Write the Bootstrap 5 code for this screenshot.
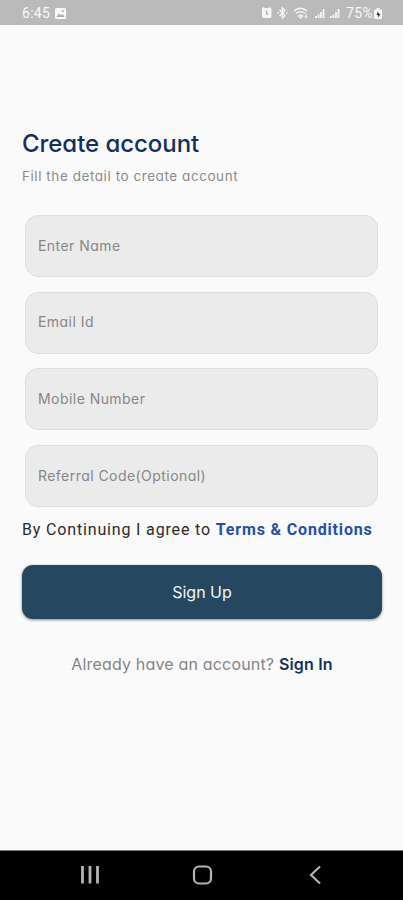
<!DOCTYPE html>
<html lang="en">
<head>
<meta charset="utf-8">
<meta name="viewport" content="width=device-width, initial-scale=1">
<title>Create account</title>
<link href="https://cdn.jsdelivr.net/npm/bootstrap@5.3.0/dist/css/bootstrap.min.css" rel="stylesheet">
<style>
body{background:#fafafa;font-family:Inter,"Open Sans",sans-serif;font-feature-settings:"cv11" 1;height:900px;overflow:hidden}
.status{height:25px;background:#bababa;color:#f8f8f8;font:14px/25px Roboto,sans-serif;letter-spacing:.3px;padding:1px 20px 0 22px}
.status svg{display:block}
.signup{padding:103px 21px 0 22px}
.title{font-size:24px;line-height:32px;font-weight:550;color:#12305f;letter-spacing:-.05px}
.subtitle{font-size:13.5px;line-height:20px;color:#8c8c8c;margin-top:6px;letter-spacing:.56px}
.fields{margin:29px 4px 0 3px;display:grid;gap:14.7px}
.fields .form-control{height:62px;border-radius:13px;background:#ebebeb;border:1px solid #dedede;padding:0 12px 2px;font-size:14px;letter-spacing:.45px;font-feature-settings:inherit}
.fields .form-control::placeholder{color:#86878a;opacity:1}
.terms{font:16px/22px Roboto,sans-serif;color:#2b2b2b;letter-spacing:.84px;margin-top:12px}
.terms a{color:#2350a4;font-weight:700}
.submit{height:54px;margin-top:24px;border-radius:11px;background:#254760;border:0;color:#f4f6f8;font-size:16px;font-feature-settings:inherit;box-shadow:0 1px 3px #0007}
.signin{font-size:16px;line-height:24px;margin-top:33px;color:#858585;letter-spacing:.18px}
.signin a{color:#12335c;font-weight:600}
.sysnav{height:50px;background:#000;border-top:1px solid #777}
</style>
</head>
<body class="d-flex flex-column">
<header class="status d-flex align-items-center flex-shrink-0">
<span id="clock">6:45</span>
<svg class="ms-1" width="13" height="13" viewBox="0 0 13 13"><rect x="1" y="1" width="11" height="11" rx="1.5" fill="#f8f8f8"/><path d="M2.500 10 5 6.500l2 2L8.500 7l2.200 3z" fill="#aaa"/><circle cx="8.800" cy="4" r="1" fill="#aaa"/></svg>
<div class="d-flex align-items-center ms-auto">
<svg width="86" height="16" viewBox="0 0 86 16" fill="none" stroke="#f6f6f6" stroke-width="1.300">
<path d="M2 4l2-1.500M9 2.500 11 4"/><rect x="2" y="3" width="9.500" height="10" rx="2" fill="#f6f6f6" stroke="none"/><path d="M6.500 5.500v3l2 1" stroke="#aaa"/>
<path d="M19.500 4.800l5.500 6-2.700 2.500V2.700L25 5.200l-5.500 6M17.500 8h1.500M26 8h1.500"/>
<path d="M34 6q6.500-5.500 13 0M36 8.500q4.500-3.700 9 0M38.500 11q2-1.800 4 0l-2 2z"/><path d="M46 8.500v4.500m-1.500-1.500L46 13l1.500-1.500" stroke-width="1"/>
<path d="M56 13v-2M58.500 13V9.500M61 13V7M63.500 13V4M71 13v-2M73.500 13V9.500M76 13V7M78.500 13V4" stroke-width="1.800"/>
</svg>
<span id="battery">75%</span>
<svg width="10" height="13" viewBox="0 0 10 13"><path d="M1 3.500q0-1 1-1h1.500V1h3v1.500H8q1 0 1 1V11q0 1-1 1H2q-1 0-1-1z" fill="#f6f6f6"/><path d="M5 4.500 3.500 8H5v2.500L7.500 7H6z" fill="#333"/></svg>
</div>
</header>
<main class="signup flex-grow-1">
<h1 class="title m-0">Create account</h1>
<p class="subtitle mb-0">Fill the detail to create account</p>
<form>
<div class="fields">
<input class="form-control shadow-none" type="text" placeholder="Enter Name" aria-label="Name">
<input class="form-control shadow-none" type="email" placeholder="Email Id" aria-label="Email">
<input class="form-control shadow-none" type="tel" placeholder="Mobile Number" aria-label="Mobile number">
<input class="form-control shadow-none" type="text" placeholder="Referral Code(Optional)" aria-label="Referral code">
</div>
<p class="terms mb-0 text-nowrap">By Continuing I agree to <a href="#" class="text-decoration-none">Terms &amp; Conditions</a></p>
<button type="button" class="submit btn w-100 d-flex align-items-center justify-content-center">Sign Up</button>
</form>
<p class="signin mb-0 text-center text-nowrap">Already have an account? <a href="#" class="text-decoration-none">Sign In</a></p>
</main>
<footer class="sysnav flex-shrink-0">
<svg class="d-block" width="403" height="49" viewBox="0 0 403 49" fill="none" stroke="#b4b4b4" stroke-width="2.200"><path d="M82.500 15v17.500M90 15v17.500M97.500 15v17.500" stroke-width="2.800"/><rect x="194" y="15.500" width="17" height="17" rx="5"/><path d="m320 15.500-9 8.500 9 8.500"/></svg>
</footer>
<script src="https://cdn.jsdelivr.net/npm/bootstrap@5.3.0/dist/js/bootstrap.bundle.min.js"></script>
</body>
</html>
